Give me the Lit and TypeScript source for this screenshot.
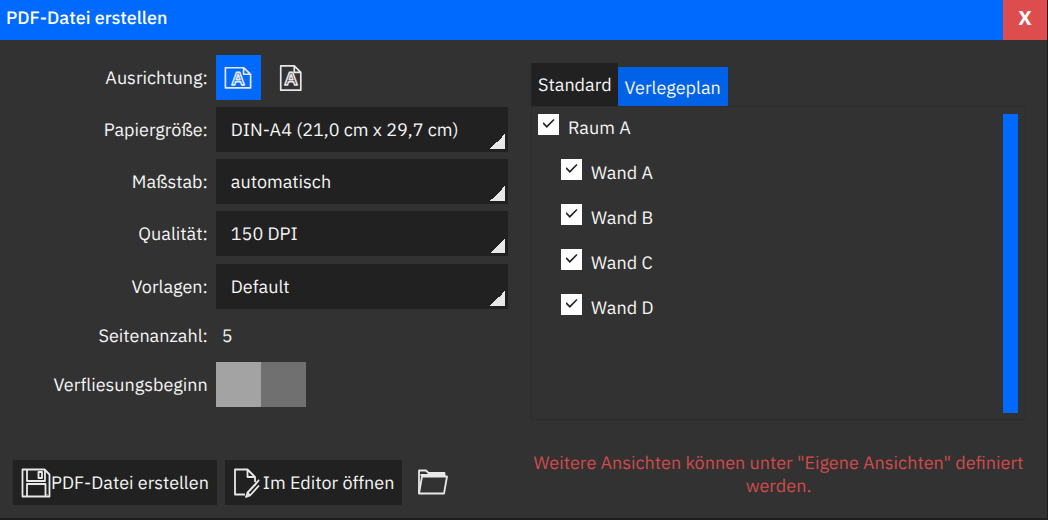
import { LitElement, html, css, svg } from "lit";
import { customElement, state } from "lit/decorators.js";

const landscapeIcon = svg`
  <path d="M1.500 4h19.500l7.500 7v14.500h-27z M21 4v7h7.500"/>
  <text class="letter" x="15" y="22">A</text>`;

const portraitIcon = svg`
  <path d="M4 2h14.500l7 7v19h-21.500z M18.500 2v7h7"/>
  <text class="letter" x="15" y="22">A</text>`;

const saveIcon = svg`
  <path d="M1.500 1.500h22l5 5v22h-27z"/>
  <path d="M6 1.500v11.500h18v-11.500 M6 28.500v-12.500h18.500v12.500"/>
  <rect x="17.500" y="4" width="3.500" height="6"/>
  <path d="M26 26v.5"/>`;

const editIcon = svg`
  <path d="M12 26.500h-10v-25h12.500l7.500 7.500v5 M14.500 1.500v7.500h7.500"/>
  <path d="M22 17l-7.500 8-1.500 4 4-1.500 9-10 M14.500 25l2.500 2.500 M26 12l-12 13 M22 17l4-5"/>`;

const folderIcon = svg`
  <path d="M1 25.500v-23h7l2.500 2.500h16v3.500"/>
  <path d="M1 25.500l3-17h25l-3 17z M2.500 7h24"/>`;

interface Choice {
  id: string;
  label: string;
  options: string[];
}

const choices: Choice[] = [
  { id: "paper", label: "Papiergröße:", options: ["DIN-A4 (21,0 cm x 29,7 cm)"] },
  { id: "scale", label: "Maßstab:", options: ["automatisch"] },
  { id: "quality", label: "Qualität:", options: ["150 DPI"] },
  { id: "template", label: "Vorlagen:", options: ["Default"] },
];

@customElement("app-root")
export class AppRoot extends LitElement {
  @state() private landscape = true;
  @state() private tab = 1;

  static styles = css`
    :host {
      display: flex;
      flex-direction: column;
      box-sizing: border-box;
      min-height: 100vh;
      border-right: 1px solid #1e1e1e;
      border-bottom: 2px solid #1e1e1e;
      background: #323232;
      color: #f4f4f4;
      font: 18px/23px "IBM Plex Sans", Roboto, sans-serif;
      text-rendering: geometricPrecision;
    }
    * {
      box-sizing: border-box;
    }
    button,
    select,
    input {
      margin: 0;
      border: 0;
      border-radius: 0;
      font: inherit;
      color: inherit;
      text-rendering: inherit;
    }
    button {
      padding: 0;
      background: none;
      cursor: pointer;
    }
    svg {
      display: block;
      width: 30px;
      height: 30px;
      fill: none;
      stroke: #e8e8e8;
      stroke-width: 1.8;
      stroke-linejoin: round;
    }
    .letter {
      font: 700 20px "Liberation Sans", sans-serif;
      text-anchor: middle;
      stroke-width: 1.6;
    }
    .titlebar {
      display: flex;
      justify-content: space-between;
      height: 40px;
      background: #006aff;
      color: #fff;
    }
    .title {
      margin: 0;
      padding: 6px;
      font: inherit;
      font-weight: 500;
    }
    .close {
      width: 44px;
      padding-bottom: 6px;
      background: #de4d4d;
      font-size: 20px;
      font-weight: 700;
    }
    .body {
      flex: 1;
      display: grid;
      grid-template-columns: 1fr 1fr;
      column-gap: 23px;
      padding: 15px 21px 13px 13px;
    }
    .settings {
      display: flex;
      flex-direction: column;
    }
    .form {
      flex: 1;
      display: flex;
      flex-direction: column;
      justify-content: space-between;
    }
    .row {
      display: grid;
      grid-template-columns: 2fr 3fr;
      column-gap: 8px;
      align-items: center;
    }
    .label {
      text-align: right;
    }
    .orient {
      display: flex;
      gap: 8px;
    }
    .square {
      display: grid;
      place-items: center;
      width: 45px;
      height: 45px;
    }
    .square.on {
      background: #006aff;
    }
    .square.small svg {
      width: 28px;
      height: 28px;
    }
    .select {
      appearance: none;
      width: 100%;
      height: 45px;
      padding: 0 24px 0 15px;
      background: linear-gradient(135deg, transparent 50%, #e8e8e8 50%) right 3px
        bottom 3px / 15px 15px no-repeat #212121;
    }
    .count {
      padding: 8px 6px;
    }
    .switch {
      appearance: none;
      width: 90px;
      height: 45px;
      background: linear-gradient(90deg, #a3a3a3 50%, #707070 50%);
    }
    .switch:checked {
      background: linear-gradient(90deg, #707070 50%, #006aff 50%);
    }
    .views {
      display: flex;
      flex-direction: column;
      padding: 8px 0;
    }
    .tabs {
      display: flex;
      align-items: flex-end;
    }
    .tab {
      height: 43px;
      padding: 0 6px 0 7px;
      background: #212121;
    }
    .tab.on {
      height: 39px;
      padding: 2px 7px 0;
      background: #0062e6;
    }
    .panel {
      flex: 1;
      display: flex;
      justify-content: space-between;
      border: 1px solid #2d2d2d;
      padding: 7px 7px 6px 6px;
    }
    .tree {
      display: flex;
      flex-direction: column;
      gap: 18px;
    }
    .item {
      display: flex;
      align-items: flex-start;
      gap: 9px;
      height: 27px;
    }
    .item.child {
      padding-left: 23px;
    }
    .item label {
      padding-top: 2px;
    }
    .check {
      appearance: none;
      display: grid;
      place-items: center;
      width: 21px;
      height: 21px;
      padding-bottom: 2px;
      background: #fff;
    }
    .check:checked::before {
      content: "";
      width: 12px;
      height: 9px;
      background: #222;
      clip-path: polygon(0 50%, 9% 37%, 36% 72%, 91% 0, 100% 12%, 36% 100%);
    }
    .scrollbar {
      width: 15px;
      background: #006aff;
    }
    .actions {
      display: flex;
      gap: 8px;
      padding-top: 53px;
    }
    .action {
      display: flex;
      align-items: center;
      height: 45px;
      padding: 0 8px;
      background: #212121;
      white-space: nowrap;
    }
    .hint {
      margin: 0;
      padding-top: 31px;
      color: #d14b4b;
      text-align: center;
    }
  `;

  private icon(shape: unknown) {
    return html`<svg viewBox="0 0 30 30" aria-hidden="true">${shape}</svg>`;
  }

  private item(id: string, label: string, child: boolean) {
    return html`<div class="item ${child ? "child" : ""}">
      <input class="check" type="checkbox" id=${id} checked /><label for=${id}>${label}</label>
    </div>`;
  }

  render() {
    return html`
      <header class="titlebar">
        <h1 class="title">PDF-Datei erstellen</h1>
        <button class="close">X</button>
      </header>
      <main class="body">
        <section class="settings">
          <div class="form">
            <div class="row">
              <span class="label" id="orient">Ausrichtung:</span>
              <div class="orient" role="group" aria-labelledby="orient">
                <button
                  class="square small ${this.landscape ? "on" : ""}"
                  aria-label="Querformat"
                  aria-pressed=${this.landscape}
                  @click=${() => (this.landscape = true)}
                >
                  ${this.icon(landscapeIcon)}
                </button>
                <button
                  class="square small ${this.landscape ? "" : "on"}"
                  aria-label="Hochformat"
                  aria-pressed=${!this.landscape}
                  @click=${() => (this.landscape = false)}
                >
                  ${this.icon(portraitIcon)}
                </button>
              </div>
            </div>
            ${choices.map(
              (c) => html`<div class="row">
                <label class="label" for=${c.id}>${c.label}</label>
                <select class="select" id=${c.id}>
                  ${c.options.map((o) => html`<option>${o}</option>`)}
                </select>
              </div>`
            )}
            <div class="row">
              <label class="label" for="count">Seitenanzahl:</label>
              <output class="count" id="count">5</output>
            </div>
            <div class="row">
              <label class="label" for="start">Verfliesungsbeginn</label>
              <input class="switch" type="checkbox" role="switch" id="start" />
            </div>
          </div>
          <footer class="actions">
            <button class="action">${this.icon(saveIcon)}PDF-Datei erstellen</button>
            <button class="action">${this.icon(editIcon)}Im Editor öffnen</button>
            <button class="square" aria-label="Ordner öffnen">${this.icon(folderIcon)}</button>
          </footer>
        </section>
        <section class="views">
          <div class="tabs" role="tablist">
            ${["Standard", "Verlegeplan"].map(
              (t, i) => html`<button
                class="tab ${this.tab === i ? "on" : ""}"
                role="tab"
                aria-selected=${this.tab === i}
                @click=${() => (this.tab = i)}
              >
                ${t}
              </button>`
            )}
          </div>
          <div class="panel" role="tabpanel">
            <div class="tree">
              ${this.item("room-a", "Raum A", false)}
              ${["A", "B", "C", "D"].map((w) => this.item(`wall-${w}`, `Wand ${w}`, true))}
            </div>
            <div class="scrollbar"></div>
          </div>
          <p class="hint">
            Weitere Ansichten können unter "Eigene Ansichten" definiert werden.
          </p>
        </section>
      </main>
    `;
  }
}
